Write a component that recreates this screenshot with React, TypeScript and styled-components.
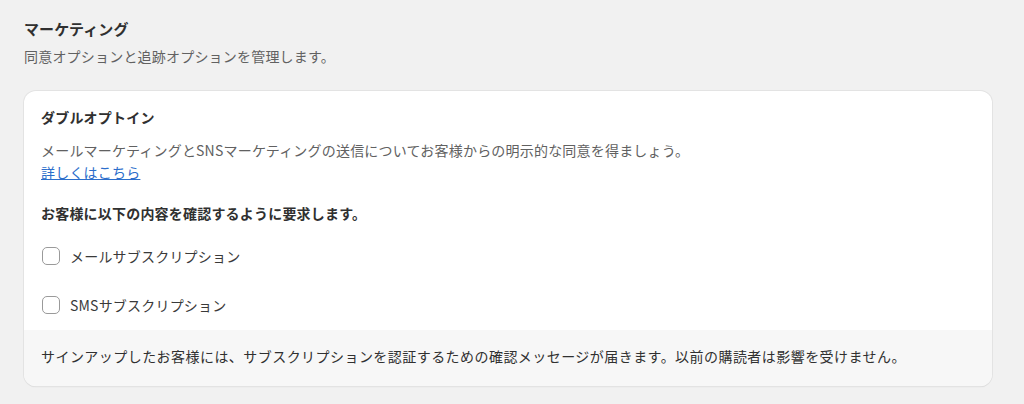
import React from "react";
import styled, { createGlobalStyle } from "styled-components";

const Global = createGlobalStyle`
  html, body { margin: 0; padding: 0; background: #f1f1f1; }
  body { font-family: "Noto Sans CJK JP", "Noto Sans", sans-serif; color: #303030; letter-spacing: 0.2px; }
`;

const Page = styled.div`
  padding: 19px 32px 20px 24px;
  display: flex;
  flex-direction: column;
`;

const Heading = styled.h2`
  margin: 0;
  font-size: 15px;
  line-height: 20px;
  font-weight: 700;
  color: #303030;
  letter-spacing: 0.1px;
`;

const Sub = styled.p`
  margin: 7px 0 0;
  font-size: 14px;
  line-height: 20px;
  color: #616161;
`;

const Card = styled.section`
  margin-top: 25px;
  background: #fff;
  border-radius: 12px;
  overflow: hidden;
  box-shadow: 0 0 0 1px #e3e3e3, 0 1px 1px 0 rgba(0, 0, 0, 0.16);
`;

const Body = styled.div`
  padding: 16px 17px 15px;
  display: flex;
  flex-direction: column;
`;

const CardTitle = styled.h3`
  margin: 0;
  font-size: 14px;
  line-height: 20px;
  font-weight: 700;
  color: #303030;
`;

const Desc = styled.p`
  margin: 12px 0 0;
  font-size: 14px;
  line-height: 22px;
  color: #616161;
`;

const Link = styled.a`
  display: block;
  font-size: 14px;
  line-height: 22px;
  color: #2c6ecb;
  text-decoration: underline;
  width: fit-content;
`;

const Strong = styled.p`
  margin: 20px 0 0;
  font-size: 14px;
  line-height: 20px;
  font-weight: 700;
  color: #303030;
`;

const Options = styled.div`
  margin-top: 23px;
  display: flex;
  flex-direction: column;
  gap: 29px;
`;

const Option = styled.label`
  display: flex;
  align-items: center;
  gap: 10px;
  height: 20px;
  padding-left: 1px;
  font-size: 14px;
  line-height: 20px;
  color: #3a3a3a;
`;

const Box = styled.span`
  width: 18px;
  height: 18px;
  box-sizing: border-box;
  border: 1.2px solid #9a9a9a;
  border-radius: 5px;
  background: #fff;
  flex: none;
`;

const Footer = styled.div`
  background: #f7f7f7;
  padding: 16px 17px 20px;
  font-size: 14px;
  line-height: 20px;
  color: #303030;
  letter-spacing: 0.45px;
`;

export default function App() {
  return (
    <>
      <Global />
      <Page>
        <Heading>マーケティング</Heading>
        <Sub>同意オプションと追跡オプションを管理します。</Sub>
        <Card>
          <Body>
            <CardTitle>ダブルオプトイン</CardTitle>
            <Desc>メールマーケティングとSNSマーケティングの送信についてお客様からの明示的な同意を得ましょう。</Desc>
            <Link href="#">詳しくはこちら</Link>
            <Strong>お客様に以下の内容を確認するように要求します。</Strong>
            <Options>
              <Option><Box />メールサブスクリプション</Option>
              <Option><Box />SMSサブスクリプション</Option>
            </Options>
          </Body>
          <Footer>サインアップしたお客様には、サブスクリプションを認証するための確認メッセージが届きます。以前の購読者は影響を受けません。</Footer>
        </Card>
      </Page>
    </>
  );
}
